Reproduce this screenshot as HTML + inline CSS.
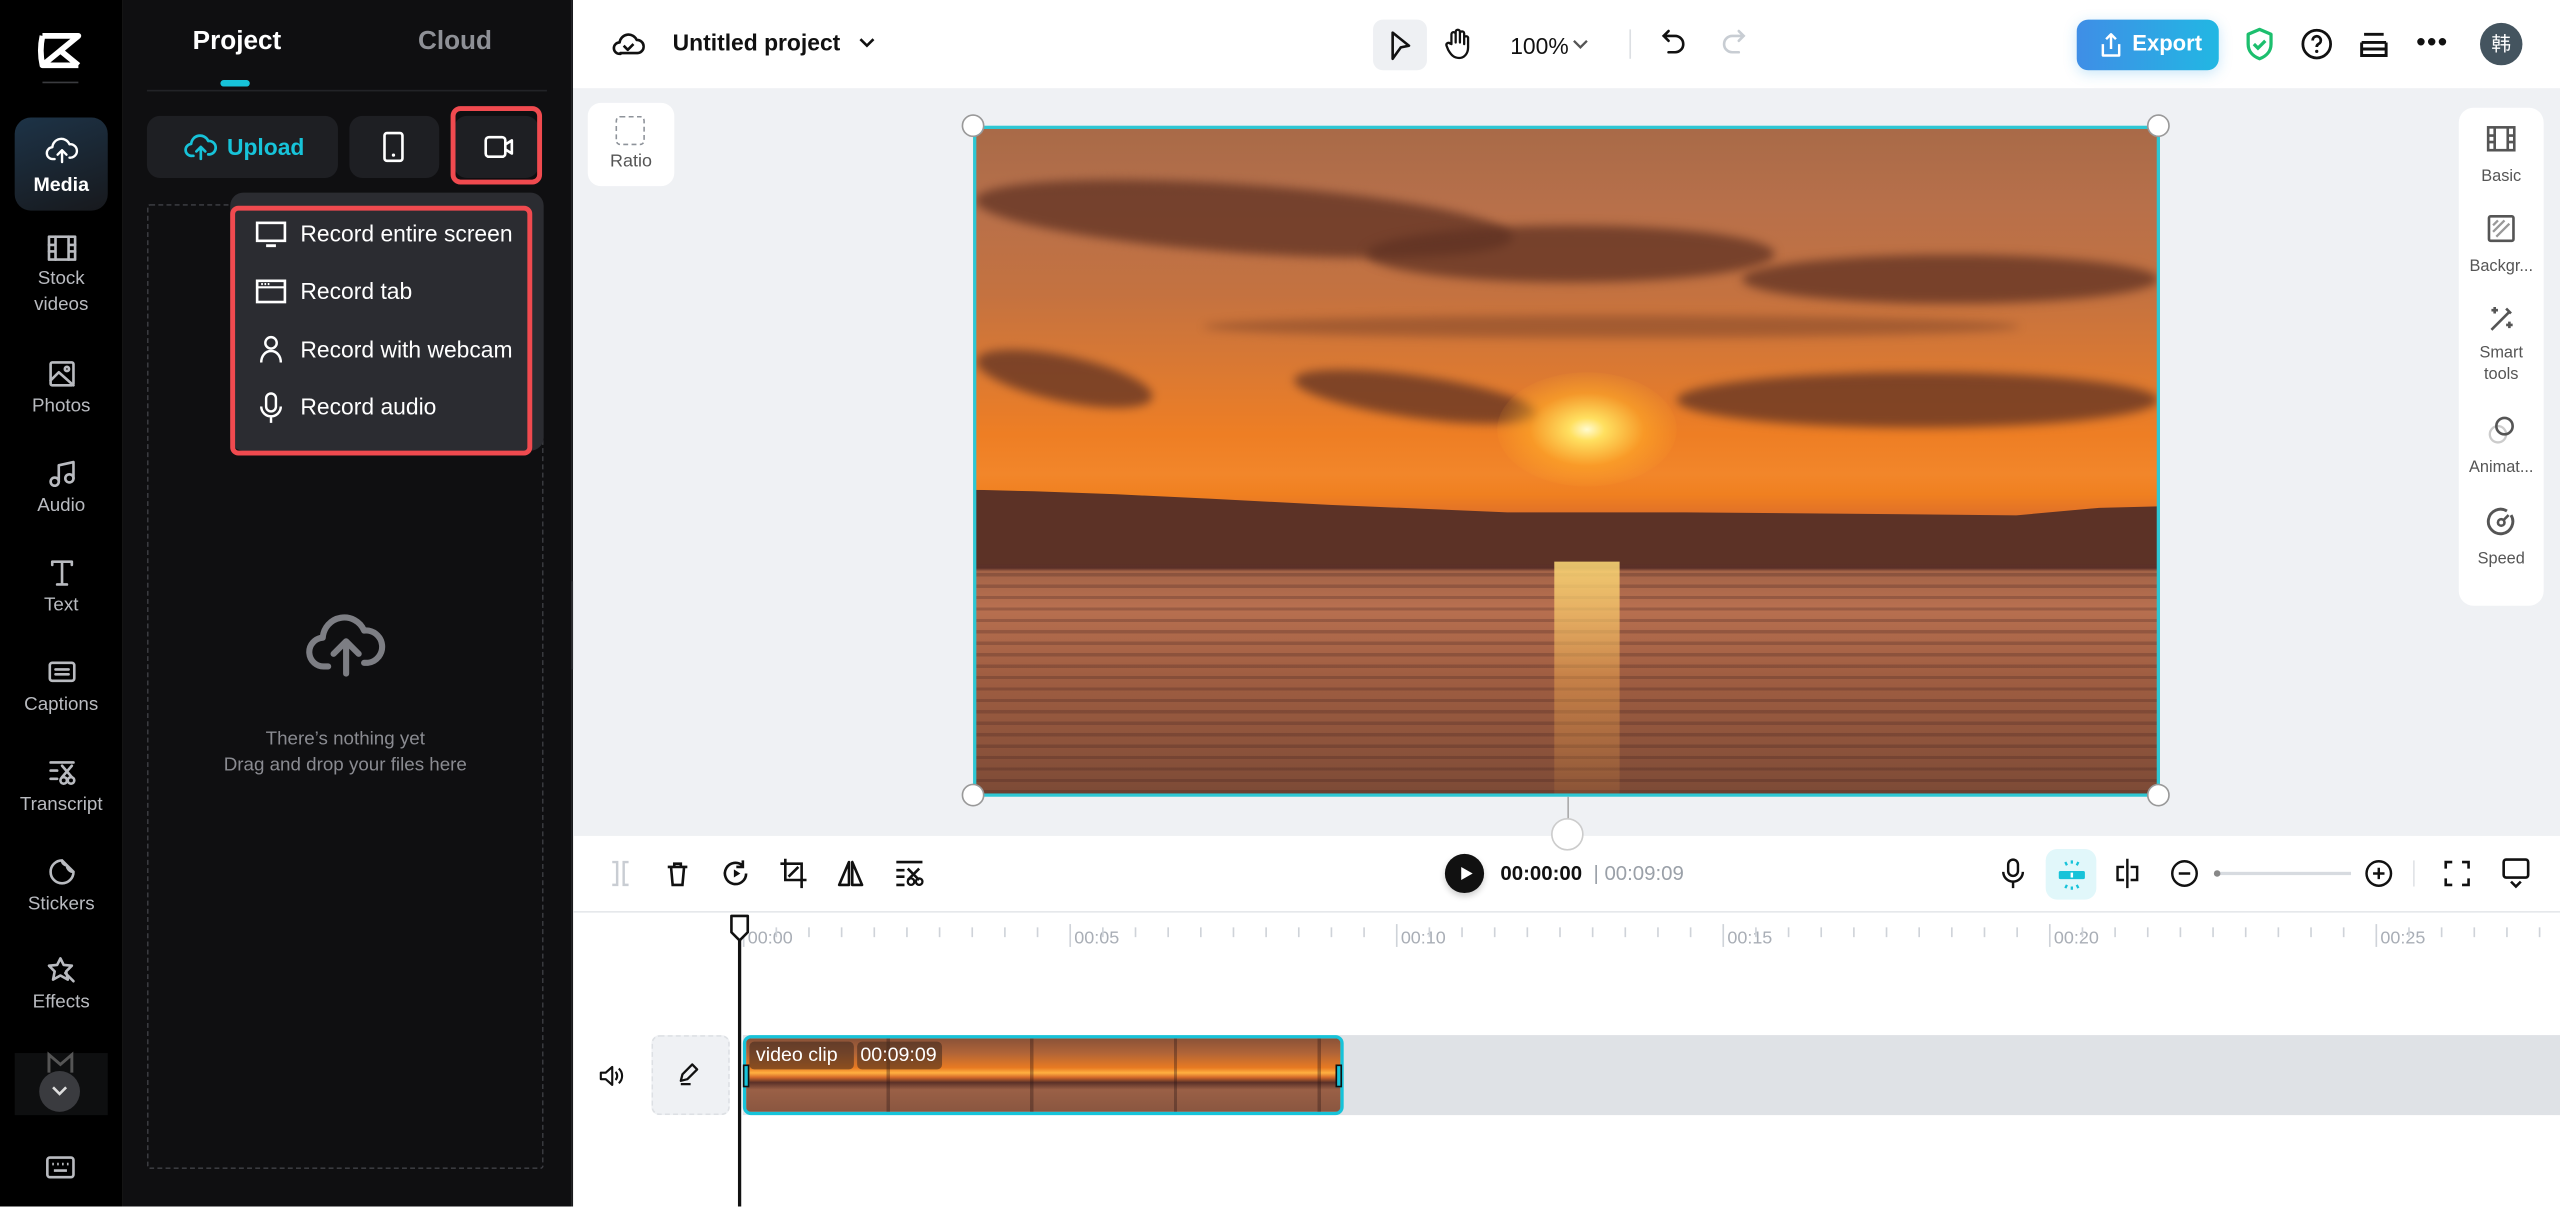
<!DOCTYPE html>
<html><head><meta charset="utf-8">
<style>
*{box-sizing:border-box;margin:0;padding:0}
html,body{width:2560px;height:1206px;overflow:hidden;background:#fff}
#w{position:absolute;left:0;top:0;width:1568px;height:739px;transform:scale(1.632653);transform-origin:0 0;font-family:"Liberation Sans","Noto Sans CJK SC",sans-serif;overflow:hidden}
.a{position:absolute}
.sb{left:0;top:0;width:75px;height:739px;background:#000}
.nav{position:absolute;left:0;width:75px;text-align:center;color:#b9bbc0;font-size:11.5px;line-height:16px}
.nav svg{display:block;margin:0 auto 3px}
.panel{left:75px;top:0;width:275px;height:739px;background:#0f0f11}
.ic{stroke:currentColor;fill:none;stroke-width:1.6;stroke-linecap:round;stroke-linejoin:round}
.tick{position:absolute;top:568px;width:1px;height:6px;background:#cfd3d9}
.maj{height:14px;top:566px}
.lab{position:absolute;top:569px;font-size:11px;color:#a9aeb6}
.cl{position:absolute;border-radius:50%;background:rgba(95,50,35,.75);filter:blur(3px)}
</style></head><body><div id="w">

<div class="a sb"></div>
<svg class="a" style="left:23px;top:20px" width="28" height="22" viewBox="0 0 28 22"><path d="M3 2 L25 2 L3 20 L25 20 M3 2 Q1 11 3 20 M25 2 L14 11 L25 20" stroke="#fff" stroke-width="3.5" fill="none" stroke-linejoin="round"/></svg>
<div class="a" style="left:26px;top:50px;width:22px;height:1px;background:#3a3b3f"></div>
<div class="a" style="left:9px;top:72px;width:57px;height:57px;border-radius:10px;background:linear-gradient(160deg,#1d3347,#17191d)"></div>
<div class="nav" style="top:82px;color:#fff;font-weight:bold;font-size:12px"><svg width="22" height="20" viewBox="0 0 24 22" class="ic"><path d="M7 17H6a4 4 0 0 1-.5-8A6 6 0 0 1 17 7a4.5 4.5 0 0 1 1 9h-1M12 19v-8M9 14l3-3 3 3"/></svg>Media</div>
<div class="nav" style="top:144px"><svg width="18" height="16" viewBox="0 0 18 16" class="ic"><rect x="1" y="1" width="16" height="14"/><path d="M5 1v14M13 1v14M1 6h4M1 10h4M13 6h4M13 10h4"/></svg>Stock<br>videos</div>
<div class="nav" style="top:220px"><svg width="18" height="18" viewBox="0 0 18 18" class="ic"><rect x="2" y="2" width="14" height="14" rx="1"/><circle cx="12" cy="6" r="1.3"/><path d="M2 13l5-5 9 8"/></svg>Photos</div>
<div class="nav" style="top:281px"><svg width="18" height="18" viewBox="0 0 18 18" class="ic"><path d="M7 14V4l9-2v10"/><circle cx="4.5" cy="14" r="2.5"/><circle cx="13.5" cy="12" r="2.5"/></svg>Audio</div>
<div class="nav" style="top:342px"><svg width="18" height="18" viewBox="0 0 18 18" class="ic"><path d="M3 4V2h12v2M9 2v14M6 16h6"/></svg>Text</div>
<div class="nav" style="top:403px"><svg width="18" height="18" viewBox="0 0 18 18" class="ic"><rect x="1.5" y="3" width="15" height="11" rx="1.5"/><path d="M5 7h8M5 10h8"/></svg>Captions</div>
<div class="nav" style="top:464px"><svg width="18" height="18" viewBox="0 0 18 18" class="ic"><path d="M2 3h14M2 8h4M2 13h4M9 5l6 7M15 5l-6 7"/><circle cx="10" cy="14" r="2"/><circle cx="14.5" cy="14" r="2"/></svg>Transcript</div>
<div class="nav" style="top:525px"><svg width="18" height="18" viewBox="0 0 18 18" class="ic"><path d="M9 2a7 7 0 1 0 7 7 4 4 0 0 1-4-4 3 3 0 0 1-3-3zM9 2l7 7"/></svg>Stickers</div>
<div class="nav" style="top:585px"><svg width="18" height="18" viewBox="0 0 18 18" class="ic"><path d="M8 2l2 4 5 .5-3.5 3.5 1 5-4.5-2.5L3.5 15l1-5L1 6.5 6 6z M11 11l5 5"/></svg>Effects</div>
<div class="a" style="left:9px;top:645px;width:57px;height:38px;background:#0e0f10"></div>
<svg class="a" style="left:28px;top:644px" width="18" height="14" viewBox="0 0 18 14"><path d="M2 13V2l7 6 7-6v11" stroke="#555" stroke-width="1.8" fill="none"/></svg>
<div class="a" style="left:24px;top:656px;width:25px;height:25px;border-radius:50%;background:#3a3b3f"></div>
<svg class="a" style="left:31px;top:664px" width="11" height="8" viewBox="0 0 11 8"><path d="M1.5 2l4 4 4-4" stroke="#ddd" stroke-width="1.6" fill="none"/></svg>
<svg class="a" style="left:28px;top:708px" width="18" height="14" viewBox="0 0 18 14"><rect x="1" y="1" width="16" height="12" rx="1.5" stroke="#b9bbc0" fill="none" stroke-width="1.6"/><path d="M4 5h1M7 5h1M10 5h1M13 5h1M5 9h8" stroke="#b9bbc0" stroke-width="1.6"/></svg>

<div class="a panel"></div>
<div class="a" style="left:118px;top:17px;font-size:16px;font-weight:bold;color:#fff">Project</div>
<div class="a" style="left:256px;top:17px;font-size:16px;font-weight:bold;color:#8e9096">Cloud</div>
<div class="a" style="left:135px;top:49px;width:18px;height:4px;border-radius:2px;background:#17c3d9"></div>
<div class="a" style="left:90px;top:55px;width:245px;height:1px;background:#222327"></div>
<div class="a" style="left:90px;top:71px;width:117px;height:38px;border-radius:8px;background:#1e1f23"></div>
<svg class="a" style="left:112px;top:80px" width="22" height="20" viewBox="0 0 24 22"><path d="M7 17H6a4 4 0 0 1-.5-8A6 6 0 0 1 17 7a4.5 4.5 0 0 1 1 9h-1M12 19v-8M9 14l3-3 3 3" stroke="#17c3d9" stroke-width="1.8" fill="none" stroke-linecap="round" stroke-linejoin="round"/></svg>
<div class="a" style="left:139px;top:82px;font-size:14px;font-weight:bold;color:#17c3d9">Upload</div>
<div class="a" style="left:214px;top:71px;width:55px;height:38px;border-radius:8px;background:#1e1f23"></div>
<svg class="a" style="left:234px;top:80px" width="14" height="20" viewBox="0 0 14 20"><rect x="1.5" y="1.5" width="11" height="17" rx="1.5" stroke="#fff" stroke-width="1.6" fill="none"/><circle cx="7" cy="15" r="1" fill="#fff"/></svg>
<div class="a" style="left:278px;top:71px;width:52px;height:38px;border-radius:8px;background:#1e1f23"></div>
<div class="a" style="left:276px;top:65px;width:56px;height:48px;border:3px solid #f04a4f;border-radius:6px"></div>
<svg class="a" style="left:296px;top:82px" width="20" height="16" viewBox="0 0 20 16"><rect x="1.5" y="2" width="12" height="12" rx="2" stroke="#fff" stroke-width="1.6" fill="none"/><path d="M13.5 6.5l4-2.5v8l-4-2.5" stroke="#fff" stroke-width="1.6" fill="none" stroke-linejoin="round"/></svg>

<div class="a" style="left:90px;top:125px;width:243px;height:591px;border:1px dashed #3a3b40;border-radius:2px"></div>
<svg class="a" style="left:185px;top:373px" width="54" height="44" viewBox="0 0 24 20"><path d="M7 16H6a4 4 0 0 1-.5-8A6 6 0 0 1 17 6a4.5 4.5 0 0 1 1 9h-1M12 18V9M8.5 12.5L12 9l3.5 3.5" stroke="#7d7e84" stroke-width="1.7" fill="none" stroke-linecap="round" stroke-linejoin="round"/></svg>
<div class="a" style="left:90px;top:445px;width:243px;text-align:center;font-size:11.5px;line-height:16px;color:#8a8b91">There’s nothing yet<br>Drag and drop your files here</div>

<div class="a" style="left:141px;top:118px;width:192px;height:158px;border-radius:8px;background:#2b2c31"></div>
<div class="a" style="left:141px;top:126px;width:185px;height:153px;border:3px solid #f04a4f;border-radius:5px"></div>
<svg class="a" style="left:156px;top:135px" width="20" height="18" viewBox="0 0 20 18"><rect x="1.5" y="1.5" width="17" height="11" stroke="#fff" stroke-width="1.6" fill="none"/><path d="M7 15.5h6" stroke="#fff" stroke-width="1.8"/></svg>
<div class="a" style="left:184px;top:135px;font-size:14px;color:#fff">Record entire screen</div>
<svg class="a" style="left:156px;top:170px" width="20" height="18" viewBox="0 0 20 18"><rect x="1.5" y="2" width="17" height="13" stroke="#fff" stroke-width="1.6" fill="none"/><path d="M1.5 6h17M4 4h1M6 4h1M8 4h1" stroke="#fff" stroke-width="1.3"/></svg>
<div class="a" style="left:184px;top:170px;font-size:14px;color:#fff">Record tab</div>
<svg class="a" style="left:157px;top:205px" width="18" height="18" viewBox="0 0 18 18"><circle cx="9" cy="5" r="3.5" stroke="#fff" stroke-width="1.5" fill="none"/><path d="M3 17c0-4 2.5-7 6-7s6 3 6 7" stroke="#fff" stroke-width="1.5" fill="none"/></svg>
<div class="a" style="left:184px;top:206px;font-size:14px;color:#fff">Record with webcam</div>
<svg class="a" style="left:157px;top:240px" width="18" height="20" viewBox="0 0 18 20"><rect x="6" y="1" width="6" height="11" rx="3" stroke="#fff" stroke-width="1.5" fill="none"/><path d="M3 9a6 6 0 0 0 12 0M9 15v4" stroke="#fff" stroke-width="1.5" fill="none"/></svg>
<div class="a" style="left:184px;top:241px;font-size:14px;color:#fff">Record audio</div>

<div class="a" style="left:350px;top:0;width:1px;height:739px;background:#1a1b1e"></div>
<div class="a" style="left:350px;top:356px;width:9px;height:54px;border-radius:0 6px 6px 0;background:#2a2b2f"></div>

<div class="a" style="left:351px;top:0;width:1217px;height:54px;background:#fff"></div>
<svg class="a" style="left:375px;top:17px" width="20" height="20" viewBox="0 0 20 20"><path d="M5 16H4.5a3.5 3.5 0 0 1 0-7A5.5 5.5 0 0 1 15 7.5a4 4 0 0 1 .5 8H5zM7 11l2.5 2.5L13 10" stroke="#111" stroke-width="1.6" fill="none" stroke-linejoin="round"/></svg>
<div class="a" style="left:412px;top:18px;font-size:14px;font-weight:bold;color:#111">Untitled project</div>
<svg class="a" style="left:525px;top:22px" width="12" height="8" viewBox="0 0 12 8"><path d="M2 2l4 4 4-4" stroke="#111" stroke-width="1.6" fill="none"/></svg>
<div class="a" style="left:841px;top:12px;width:33px;height:31px;border-radius:6px;background:#eef0f3"></div>
<svg class="a" style="left:850px;top:18px" width="16" height="20" viewBox="0 0 16 20"><path d="M3 2l10 8-5 1-5 7z" stroke="#111" stroke-width="1.6" fill="none" stroke-linejoin="round"/></svg>
<svg class="a" style="left:884px;top:17px" width="18" height="20" viewBox="0 0 18 20"><path d="M5 10V4a1.3 1.3 0 0 1 2.6 0v5V2.5a1.3 1.3 0 0 1 2.6 0V9V3.5a1.3 1.3 0 0 1 2.6 0V10V6a1.3 1.3 0 0 1 2.4 0v6c0 4-2.5 6.5-5.5 6.5S5 17 3 13.5L2 11a1.3 1.3 0 0 1 2.2-1.3z" stroke="#111" stroke-width="1.4" fill="none" stroke-linejoin="round"/></svg>
<div class="a" style="left:925px;top:20px;font-size:14px;color:#111">100%</div>
<svg class="a" style="left:962px;top:23px" width="12" height="8" viewBox="0 0 12 8"><path d="M2 2l4 4 4-4" stroke="#555" stroke-width="1.4" fill="none"/></svg>
<div class="a" style="left:998px;top:18px;width:1px;height:18px;background:#dcdfe3"></div>
<svg class="a" style="left:1016px;top:17px" width="18" height="20" viewBox="0 0 18 20"><path d="M6 2L3 5l3 3M3 5h7a5 5 0 0 1 0 10H6" stroke="#111" stroke-width="1.6" fill="none" stroke-linecap="round"/></svg>
<svg class="a" style="left:1053px;top:17px" width="18" height="20" viewBox="0 0 18 20"><path d="M12 2l3 3-3 3M15 5H8a5 5 0 0 0 0 10h4" stroke="#c8cdd3" stroke-width="1.6" fill="none" stroke-linecap="round"/></svg>
<div class="a" style="left:1272px;top:12px;width:87px;height:31px;border-radius:7px;background:linear-gradient(90deg,#3f8ee6,#22b7e3);box-shadow:0 2px 8px rgba(40,160,230,.25)"></div>
<svg class="a" style="left:1285px;top:19px" width="16" height="17" viewBox="0 0 16 17"><path d="M8 11V2M5 5l3-3 3 3M3 8v7h10V8" stroke="#fff" stroke-width="1.5" fill="none" stroke-linejoin="round"/></svg>
<div class="a" style="left:1306px;top:19px;font-size:13.5px;font-weight:bold;color:#fff">Export</div>
<svg class="a" style="left:1374px;top:16px" width="20" height="22" viewBox="0 0 20 22"><path d="M10 2l7 3v6c0 4.5-3 7.5-7 9-4-1.5-7-4.5-7-9V5z" stroke="#1cbf6e" stroke-width="2" fill="none" stroke-linejoin="round"/><path d="M6.5 11l2.5 2.5 4.5-4.5" stroke="#1cbf6e" stroke-width="2" fill="none"/></svg>
<svg class="a" style="left:1409px;top:17px" width="20" height="20" viewBox="0 0 20 20"><circle cx="10" cy="10" r="8.5" stroke="#111" stroke-width="1.7" fill="none"/><path d="M7.5 7.8a2.5 2.5 0 1 1 3.5 2.2c-.8.4-1 1-1 1.8" stroke="#111" stroke-width="1.7" fill="none"/><circle cx="10" cy="14.5" r="1" fill="#111"/></svg>
<svg class="a" style="left:1444px;top:17px" width="20" height="20" viewBox="0 0 20 20"><path d="M4 4h12M2.5 9h15M2.5 9v8h15V9M2.5 13h15" stroke="#111" stroke-width="1.8" fill="none"/></svg>
<div class="a" style="left:1480px;top:18px;font-size:16px;font-weight:bold;color:#111;letter-spacing:1px">•••</div>
<div class="a" style="left:1519px;top:14px;width:26px;height:26px;border-radius:50%;background:#44545f;color:#fff;font-size:12px;line-height:26px;text-align:center">韩</div>

<div class="a" style="left:351px;top:54px;width:1217px;height:458px;background:#eff1f4"></div>
<div class="a" style="left:360px;top:63px;width:53px;height:51px;border-radius:8px;background:#fff"></div>
<div class="a" style="left:377px;top:71px;width:18px;height:18px;border:1.5px dashed #8e939a;border-radius:3px"></div>
<div class="a" style="left:360px;top:93px;width:53px;text-align:center;font-size:11px;color:#555">Ratio</div>

<div class="a" style="left:597px;top:78px;width:725px;height:409px;overflow:hidden;background:linear-gradient(180deg,#a86a48 0%,#b8704a 12%,#c47240 25%,#de7a30 38%,#ee7e24 46%,#f2862a 52%,#f08020 55%,#e07028 58%,#7a4030 60%,#5a3028 66%,#a46448 66.5%,#b87050 72%,#a05e42 82%,#8e543c 92%,#7c4a36 100%)">
 <div class="cl" style="left:0;top:35px;width:330px;height:42px;transform:rotate(4deg)"></div>
 <div class="cl" style="left:240px;top:60px;width:250px;height:35px"></div>
 <div class="cl" style="left:470px;top:78px;width:255px;height:30px"></div>
 <div class="cl" style="left:0;top:140px;width:110px;height:28px;transform:rotate(12deg)"></div>
 <div class="cl" style="left:195px;top:152px;width:150px;height:26px;transform:rotate(8deg)"></div>
 <div class="cl" style="left:430px;top:150px;width:295px;height:34px"></div>
 <div class="cl" style="left:140px;top:115px;width:500px;height:14px;opacity:.5"></div>
 <div class="a" style="left:320px;top:150px;width:110px;height:70px;border-radius:50%;background:radial-gradient(ellipse,#fffbd0 0%,#ffe060 14%,rgba(255,170,40,.6) 45%,rgba(255,130,30,0) 75%)"></div>
 <div class="a" style="left:0;top:222px;width:725px;height:46px;background:#5c3226;clip-path:polygon(0 0,5% 2%,12% 6%,20% 12%,30% 20%,45% 30%,60% 30%,75% 32%,88% 34%,95% 24%,100% 22%,100% 100%,0 100%)"></div>
 <div class="a" style="left:0;top:268px;width:725px;height:141px;background:repeating-linear-gradient(180deg,rgba(60,30,30,0) 0 5px,rgba(60,30,30,.25) 5px 7px)"></div>
 <div class="a" style="left:355px;top:266px;width:40px;height:143px;background:linear-gradient(180deg,rgba(255,220,120,.85),rgba(255,180,80,.4) 50%,rgba(255,160,60,.1))"></div>
</div>
<div class="a" style="left:596px;top:77px;width:727px;height:411px;border:2px solid #2ec7d3"></div>
<div class="a" style="left:589px;top:70px;width:14px;height:14px;border-radius:50%;background:#fff;border:1px solid #999"></div>
<div class="a" style="left:1315px;top:70px;width:14px;height:14px;border-radius:50%;background:#fff;border:1px solid #999"></div>
<div class="a" style="left:589px;top:480px;width:14px;height:14px;border-radius:50%;background:#fff;border:1px solid #999"></div>
<div class="a" style="left:1315px;top:480px;width:14px;height:14px;border-radius:50%;background:#fff;border:1px solid #999"></div>
<div class="a" style="left:960px;top:488px;width:1px;height:14px;background:#aaa"></div>
<div class="a" style="left:950px;top:501px;width:20px;height:20px;border-radius:50%;background:#fff;border:1px solid #ccc"></div>

<div class="a" style="left:1506px;top:66px;width:52px;height:305px;border-radius:9px;background:#fff"></div>
<div class="a" style="left:1506px;top:77px;width:52px;text-align:center;font-size:10px;line-height:13px;color:#555">
 <svg width="18" height="16" viewBox="0 0 18 16"><rect x="1" y="1" width="16" height="14" stroke="#555" stroke-width="1.6" fill="none"/><path d="M5 1v14M13 1v14M1 6h4M1 10h4M13 6h4M13 10h4" stroke="#555" stroke-width="1.6"/></svg><div style="margin-top:5px">Basic</div>
 <svg style="margin-top:16px" width="18" height="18" viewBox="0 0 18 18"><rect x="1.5" y="1.5" width="15" height="15" rx="1" stroke="#555" stroke-width="1.6" fill="none"/><path d="M4 11l7-7M6 14l8-8M4 7l3-3" stroke="#999" stroke-width="1.4"/></svg><div style="margin-top:4px">Backgr...</div>
 <svg style="margin-top:16px" width="18" height="18" viewBox="0 0 18 18"><path d="M3 16L14 5M12 3l3 3M5 2v4M3 4h4M14 11v4M12 13h4" stroke="#555" stroke-width="1.6" fill="none"/></svg><div style="margin-top:2px">Smart<br>tools</div>
 <svg style="margin-top:18px" width="18" height="18" viewBox="0 0 18 18"><circle cx="7" cy="12" r="5" stroke="#ccc" stroke-width="1.4" fill="none"/><circle cx="11" cy="7" r="5" stroke="#555" stroke-width="1.6" fill="none"/></svg><div style="margin-top:4px">Animat...</div>
 <svg style="margin-top:17px" width="18" height="18" viewBox="0 0 18 18"><path d="M15 5.5A7.5 7.5 0 1 1 12.5 3" stroke="#555" stroke-width="1.8" fill="none"/><circle cx="9" cy="10" r="2" stroke="#555" stroke-width="1.6" fill="none"/><path d="M10.5 8.5l3-3" stroke="#555" stroke-width="1.6"/></svg><div style="margin-top:4px">Speed</div>
</div>

<div class="a" style="left:351px;top:558px;width:1217px;height:1px;background:#e6e8eb"></div>
<svg class="a" style="left:372px;top:526px" width="16" height="18" viewBox="0 0 16 18"><path d="M3 2h3v14H3M13 2h-3v14h3" stroke="#c9cdd3" stroke-width="1.5" fill="none"/></svg>
<svg class="a" style="left:407px;top:526px" width="16" height="18" viewBox="0 0 16 18"><path d="M2 5h12M4 5l1 11h6l1-11M6 5V3h4v2" stroke="#111" stroke-width="1.6" fill="none"/></svg>
<svg class="a" style="left:442px;top:526px" width="18" height="18" viewBox="0 0 18 18"><path d="M15 9a6.5 6.5 0 1 1-2-4.7M13 1v4h-4" stroke="#111" stroke-width="1.6" fill="none"/><path d="M7.5 6.5v5l4-2.5z" fill="#111"/></svg>
<svg class="a" style="left:477px;top:525px" width="18" height="20" viewBox="0 0 18 20"><path d="M4 1v13h13M1 4h13v15M6 12l6-6" stroke="#111" stroke-width="1.6" fill="none"/></svg>
<svg class="a" style="left:512px;top:526px" width="18" height="18" viewBox="0 0 18 18"><path d="M8 2L2 16h6zM10 2v14h6z" stroke="#111" stroke-width="1.6" fill="none" stroke-linejoin="round"/></svg>
<svg class="a" style="left:548px;top:526px" width="18" height="18" viewBox="0 0 18 18"><path d="M1 2h16M1 7h5M1 11h5M1 16h5M8 6l7 7M15 6l-7 7" stroke="#111" stroke-width="1.6" fill="none"/><circle cx="10" cy="14" r="2" stroke="#111" stroke-width="1.4" fill="none"/><circle cx="15" cy="14" r="2" stroke="#111" stroke-width="1.4" fill="none"/></svg>
<div class="a" style="left:885px;top:523px;width:24px;height:24px;border-radius:50%;background:#111;box-shadow:0 2px 4px rgba(0,0,0,.2)"></div>
<svg class="a" style="left:893px;top:530px" width="10" height="10" viewBox="0 0 10 10"><path d="M2 1v8l7-4z" fill="#fff"/></svg>
<div class="a" style="left:919px;top:528px;font-size:12.5px;font-weight:bold;color:#111">00:00:00</div>
<div class="a" style="left:976px;top:528px;font-size:12.5px;color:#9aa0a8">| 00:09:09</div>
<svg class="a" style="left:1225px;top:525px" width="16" height="20" viewBox="0 0 16 20"><rect x="5" y="1.5" width="6" height="10" rx="3" stroke="#111" stroke-width="1.5" fill="none"/><path d="M2 9a6 6 0 0 0 12 0M8 15v4" stroke="#111" stroke-width="1.5" fill="none"/></svg>
<div class="a" style="left:1253px;top:520px;width:31px;height:31px;border-radius:7px;background:#e1f7fa"></div>
<svg class="a" style="left:1259px;top:526px" width="20" height="20" viewBox="0 0 20 20"><rect x="2" y="7.5" width="16" height="5" rx="1" fill="#17c3d9"/><path d="M10 8.5v3" stroke="#fff" stroke-width="1.5"/><path d="M6 2l1 2M10 1v2M14 2l-1 2M6 18l1-2M10 19v-2M14 18l-1-2" stroke="#17c3d9" stroke-width="1.4"/></svg>
<svg class="a" style="left:1294px;top:525px" width="18" height="20" viewBox="0 0 18 20"><path d="M9 1v18M7 6H3v8h4M11 6h4v8h-4" stroke="#111" stroke-width="1.5" fill="none"/></svg>
<svg class="a" style="left:1329px;top:526px" width="18" height="18" viewBox="0 0 18 18"><circle cx="9" cy="9" r="7.5" stroke="#111" stroke-width="1.5" fill="none"/><path d="M5.5 9h7" stroke="#111" stroke-width="1.5"/></svg>
<div class="a" style="left:1357px;top:534px;width:83px;height:2px;background:#d7dbe0"></div>
<div class="a" style="left:1356px;top:533px;width:4px;height:4px;border-radius:50%;background:#888"></div>
<svg class="a" style="left:1448px;top:526px" width="18" height="18" viewBox="0 0 18 18"><circle cx="9" cy="9" r="7.5" stroke="#111" stroke-width="1.5" fill="none"/><path d="M5.5 9h7M9 5.5v7" stroke="#111" stroke-width="1.5"/></svg>
<div class="a" style="left:1478px;top:527px;width:1px;height:16px;background:#e0e3e6"></div>
<svg class="a" style="left:1497px;top:527px" width="16" height="16" viewBox="0 0 16 16"><path d="M1 5V1h4M11 1h4v4M15 11v4h-4M5 15H1v-4" stroke="#111" stroke-width="1.6" fill="none"/></svg>
<svg class="a" style="left:1532px;top:525px" width="18" height="20" viewBox="0 0 18 20"><rect x="1.5" y="1.5" width="15" height="11" rx="1.5" stroke="#111" stroke-width="1.6" fill="none"/><path d="M6 15l3 3 3-3" stroke="#111" stroke-width="1.6" fill="none"/></svg>

<div id="r"></div>
<script>
var h='';for(var i=0;i<56;i++){var x=455+i*20;var m=i%10==0;h+='<div class="tick'+(m?' maj':'')+'" style="left:'+x+'px"></div>';if(m)h+='<div class="lab" style="left:'+(x+3)+'px">00:'+('0'+(i/2)).slice(-2)+'</div>';}
document.getElementById('r').innerHTML=h;
</script>

<svg class="a" style="left:366px;top:651px" width="16" height="16" viewBox="0 0 16 16"><path d="M2 6h3l4-3.5v11L5 10H2zM11 5.5a3.5 3.5 0 0 1 0 5M13 3.5a6 6 0 0 1 0 9" stroke="#111" stroke-width="1.3" fill="none" stroke-linejoin="round"/></svg>
<div class="a" style="left:399px;top:634px;width:48px;height:49px;border-radius:5px;background:#eff1f4;border:1px dashed #dde0e4"></div>
<svg class="a" style="left:414px;top:650px" width="16" height="16" viewBox="0 0 16 16"><path d="M3 12l1-4 6-6 3 3-6 6zM3 14h6" stroke="#111" stroke-width="1.4" fill="none" stroke-linejoin="round"/></svg>
<div class="a" style="left:455px;top:634px;width:1113px;height:49px;background:#dfe2e6"></div>
<div class="a" style="left:455px;top:634px;width:368px;height:49px;border-radius:5px;border:2px solid #17c3d9;overflow:hidden;background:repeating-linear-gradient(90deg,transparent 0 86px,rgba(40,20,20,.35) 86px 88px),linear-gradient(180deg,#8a5238 0%,#b06438 20%,#e87a22 40%,#ffb040 47%,#d46a2a 53%,#5a3028 60%,#9a6046 70%,#8a5640 100%)">
 <div class="a" style="left:2px;top:2px;width:64px;height:17px;background:rgba(60,40,30,.55);border-radius:3px"></div>
 <div class="a" style="left:68px;top:2px;width:52px;height:17px;background:rgba(60,40,30,.55);border-radius:3px"></div>
 <div class="a" style="left:6px;top:3px;font-size:12px;color:#fff">video clip</div>
 <div class="a" style="left:70px;top:3px;font-size:12px;color:#fff">00:09:09</div>
</div>
<div class="a" style="left:455px;top:652px;width:4px;height:14px;background:#17c3d9;border:1px solid #111"></div>
<div class="a" style="left:818px;top:652px;width:4px;height:14px;background:#17c3d9;border:1px solid #111"></div>
<div class="a" style="left:452px;top:568px;width:2px;height:171px;background:#111"></div>
<svg class="a" style="left:446px;top:559px" width="14" height="18" viewBox="0 0 14 18"><path d="M2 2h10v10l-5 5-5-5z" fill="#fff" stroke="#111" stroke-width="1.6" stroke-linejoin="round"/></svg>

</div></body></html>
